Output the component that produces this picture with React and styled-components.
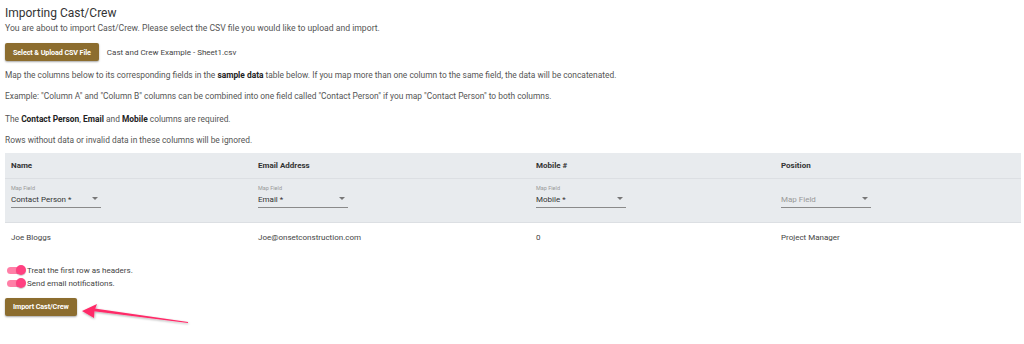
import React from "react";
import styled, { createGlobalStyle } from "styled-components";

const Global = createGlobalStyle`
  html, body { margin: 0; padding: 0; background: #fff; }
  body { font-family: Roboto, "Noto Sans", sans-serif; color: #555; }
`;

const Page = styled.div`
  position: relative;
  padding: 4px 3px 0 5px;
  width: 1024px;
  height: 344px;
  box-sizing: border-box;
  overflow: hidden;
`;

const Title = styled.h1`
  margin: 0;
  font-size: 12px;
  font-weight: 400;
  color: #333;
  line-height: 18px;
`;

const Text = styled.p`
  margin: ${(p) => p.$m || "0"};
  font-size: ${(p) => p.$size || "8px"};
  line-height: 12px;
  color: #555;
  b { color: #222; font-weight: 700; }
`;

const UploadRow = styled.div`
  display: flex;
  align-items: center;
  gap: 8px;
  margin-top: 9px;
`;

const Button = styled.button`
  background: #8c6d2f;
  color: #fff;
  border: none;
  border-radius: 2px;
  height: 18px;
  padding: 0 ${(p) => p.$px || "8px"};
  font-family: Roboto, sans-serif;
  font-weight: 700;
  font-size: 7.2px;
  letter-spacing: -0.1px;
  box-shadow: 0 1px 2px rgba(0, 0, 0, 0.35);
  cursor: pointer;
`;

const FileName = styled.span`
  font-size: 8px;
  color: #444;
`;

const Table = styled.div`
  margin-top: 7px;
  width: 1016px;
  display: grid;
  grid-template-columns: 247px 278px 245px 246px;
`;

const HeadCell = styled.div`
  background: #e8ebee;
  height: 25px;
  display: flex;
  align-items: center;
  padding-left: 6px;
  font-size: 8px;
  font-weight: 700;
  color: #333;
  border-bottom: 1px solid #dcdfe3;
`;

const MapCell = styled.div`
  background: #e8ebee;
  height: 44px;
  padding: 6px 0 0 6px;
  box-sizing: border-box;
  border-bottom: 1px solid #dcdfe3;
`;

const Select = styled.div`
  width: 90px;
  border-bottom: 1px solid #8a8a8a;
  position: relative;
`;

const SelectLabel = styled.div`
  font-size: 5.5px;
  color: #999;
  line-height: 7px;
`;

const SelectValue = styled.div`
  font-size: 8px;
  line-height: 13px;
  height: 15px;
  padding-top: 1px;
  box-sizing: border-box;
  color: ${(p) => (p.$placeholder ? "#999" : "#333")};
`;

const Caret = styled.span`
  position: absolute;
  right: 3px;
  bottom: 7px;
  width: 0;
  height: 0;
  border-left: 3px solid transparent;
  border-right: 3px solid transparent;
  border-top: 3px solid #777;
`;

const DataCell = styled.div`
  height: 28px;
  display: flex;
  align-items: center;
  padding-left: 6px;
  font-size: 8px;
  color: #444;
`;

const Toggles = styled.div`
  margin-top: 14px;
  display: flex;
  flex-direction: column;
  gap: 3px;
`;

const ToggleRow = styled.label`
  display: flex;
  align-items: center;
  gap: 3px;
  font-size: 8px;
  color: #444;
  height: 10px;
`;

const Track = styled.span`
  position: relative;
  width: 17px;
  height: 7px;
  border-radius: 4px;
  background: #ff7fa7;
  margin-left: 2px;
`;

const Thumb = styled.span`
  position: absolute;
  right: -2px;
  top: -1.5px;
  width: 10px;
  height: 10px;
  border-radius: 50%;
  background: #ff4081;
  box-shadow: 0 1px 1px rgba(0, 0, 0, 0.2);
`;

const ImportWrap = styled.div`
  margin-top: 6px;
`;

const Arrow = styled.svg`
  position: absolute;
  left: 80px;
  top: 302px;
`;

const columns = [
  { head: "Name", value: "Contact Person *", data: "Joe Bloggs" },
  { head: "Email Address", value: "Email *", data: "Joe@onsetconstruction.com" },
  { head: "Mobile #", value: "Mobile *", data: "0" },
  { head: "Position", value: null, data: "Project Manager" },
];

export default function App() {
  return (
    <Page>
      <Global />
      <Title>Importing Cast/Crew</Title>
      <Text $size="8.65px" $m="0">
        You are about to import Cast/Crew. Please select the CSV file you would like to upload and import.
      </Text>
      <UploadRow>
        <Button>Select &amp; Upload CSV File</Button>
        <FileName>Cast and Crew Example - Sheet1.csv</FileName>
      </UploadRow>
      <Text $size="8.4px" $m="8px 0 0">
        Map the columns below to its corresponding fields in the <b>sample data</b> table below. If you map more than one column to the same field, the data will be concatenated.
      </Text>
      <Text $size="8.4px" $m="9px 0 0">
        Example: "Column A" and "Column B" columns can be combined into one field called "Contact Person" if you map "Contact Person" to both columns.
      </Text>
      <Text $size="8.4px" $m="11px 0 0">
        The <b>Contact Person</b>, <b>Email</b> and <b>Mobile</b> columns are required.
      </Text>
      <Text $size="8.4px" $m="9px 0 0">
        Rows without data or invalid data in these columns will be ignored.
      </Text>
      <Table>
        {columns.map((c) => (
          <HeadCell key={"h" + c.head}>{c.head}</HeadCell>
        ))}
        {columns.map((c) => (
          <MapCell key={"m" + c.head}>
            <Select>
              <SelectLabel>{c.value ? "Map Field" : "\u00a0"}</SelectLabel>
              <SelectValue $placeholder={!c.value}>{c.value || "Map Field"}</SelectValue>
              <Caret />
            </Select>
          </MapCell>
        ))}
        {columns.map((c) => (
          <DataCell key={"d" + c.head}>{c.data}</DataCell>
        ))}
      </Table>
      <Toggles>
        <ToggleRow>
          <Track><Thumb /></Track>
          Treat the first row as headers.
        </ToggleRow>
        <ToggleRow>
          <Track><Thumb /></Track>
          Send email notifications.
        </ToggleRow>
      </Toggles>
      <ImportWrap>
        <Button $px="8px">Import Cast/Crew</Button>
      </ImportWrap>
      <Arrow width="112" height="26" viewBox="0 0 112 26">
        <defs>
          <filter id="sh" x="-10%" y="-30%" width="120%" height="160%">
            <feDropShadow dx="0.5" dy="1" stdDeviation="0.8" floodOpacity="0.35" />
          </filter>
        </defs>
        <g filter="url(#sh)">
          <path d="M108 21 L14 9.2 L14.6 6.5 L108 20 Z" fill="#ff2a68" />
          <path d="M2 9 L17 2 L14.5 8.5 L14 16 Z" fill="#ff2a68" />
        </g>
      </Arrow>
    </Page>
  );
}
